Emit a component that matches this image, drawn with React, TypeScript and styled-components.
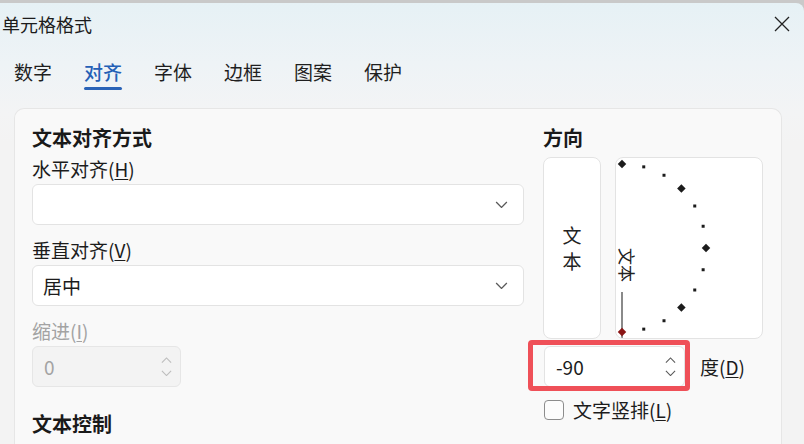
import { FC, ReactNode } from "react";
import styled, { createGlobalStyle } from "styled-components";

const GlobalStyle = createGlobalStyle`
  html, body {
    margin: 0;
    padding: 0;
    background: #c9c9c9;
    overflow: hidden;
  }
  body {
    font-family: "Noto Sans CJK SC", "Noto Sans", sans-serif;
    color: #1c1c1c;
  }
  u {
    text-decoration-thickness: 1px;
    text-underline-offset: 2px;
  }
`;

const DialogWindow = styled.div`
  margin-top: 3px;
  height: 441px;
  width: 804px;
  border-top-right-radius: 8px;
  overflow: hidden;
  background: linear-gradient(180deg, #e6f1f5 0px, #eef3f6 60px, #f3f4f5 110px, #f3f3f3 140px);
  display: flex;
  flex-direction: column;
`;

const TitleBar = styled.div`
  height: 41px;
  display: flex;
  align-items: center;
  justify-content: space-between;
  padding: 0 14px 0 2px;
`;

const TitleText = styled.span`
  font-size: 18px;
  line-height: 24px;
`;

const CloseButton = styled.div`
  width: 16px;
  height: 16px;
  display: flex;
  cursor: pointer;
`;

const TabBar = styled.div`
  display: flex;
  gap: 32px;
  padding: 15px 0 0 14px;
`;

const TabItem = styled.div<{ active?: boolean }>`
  display: flex;
  flex-direction: column;
  align-items: center;
  font-size: 19px;
  line-height: 26px;
  color: ${({ active }) => (active ? "#2560b6" : "#1f1f1f")};
  font-weight: ${({ active }) => (active ? 500 : 400)};
  &::after {
    content: "";
    margin-top: 2px;
    width: 38px;
    height: 3px;
    border-radius: 2px;
    background: ${({ active }) => (active ? "#2a63b7" : "transparent")};
  }
`;

const Card = styled.div`
  margin: 18px 0 0 14px;
  width: 768px;
  flex: 1;
  box-sizing: border-box;
  background: #f9f9f9;
  border: 1px solid #e6e6e6;
  border-bottom: none;
  border-radius: 10px 10px 0 0;
  padding: 15px 17px 0 17px;
  display: grid;
  grid-template-columns: 492px 221px;
  column-gap: 19px;
  align-items: start;
`;

const Column = styled.div`
  display: flex;
  flex-direction: column;
`;

const Heading = styled.div<{ gap?: number }>`
  font-size: 20px;
  line-height: 28px;
  font-weight: 700;
  color: #1a1a1a;
  margin-top: ${({ gap }) => gap ?? 0}px;
`;

const FieldLabel = styled.div<{ gap?: number; disabled?: boolean }>`
  font-size: 19px;
  line-height: 26px;
  margin-top: ${({ gap }) => gap ?? 0}px;
  color: ${({ disabled }) => (disabled ? "#a3a3a3" : "#1c1c1c")};
`;

const SelectBox = styled.div`
  margin-top: 2px;
  height: 41px;
  box-sizing: border-box;
  background: #ffffff;
  border: 1px solid #e3e3e3;
  border-radius: 6px;
  display: flex;
  align-items: center;
  justify-content: space-between;
  padding: 0 15px 0 10px;
  font-size: 19px;
`;

const SpinWrap = styled.div`
  margin-top: 2px;
`;

const SpinBox = styled.div<{ width: number; disabled?: boolean }>`
  width: ${({ width }) => width}px;
  height: 41px;
  box-sizing: border-box;
  background: ${({ disabled }) => (disabled ? "#f3f3f3" : "#ffffff")};
  border: 1px solid ${({ disabled }) => (disabled ? "#e6e6e6" : "#e3e3e3")};
  border-radius: 6px;
  display: flex;
  align-items: center;
  justify-content: space-between;
  padding: 0 8px 0 11px;
  font-size: 19px;
  color: ${({ disabled }) => (disabled ? "#a3a3a3" : "#1c1c1c")};
`;

const SpinArrows = styled.div<{ faint?: boolean }>`
  display: flex;
  flex-direction: column;
  gap: 6px;
  opacity: ${({ faint }) => (faint ? 0.35 : 1)};
`;

const OrientationRow = styled.div`
  margin-top: 5px;
  display: flex;
  gap: 14px;
`;

const OrientationPanel = styled.div<{ width: number }>`
  width: ${({ width }) => width}px;
  height: 182px;
  box-sizing: border-box;
  background: #ffffff;
  border: 1px solid #e3e3e3;
  border-radius: 8px;
  overflow: hidden;
  position: relative;
`;

const VerticalText = styled.div`
  height: 100%;
  display: flex;
  flex-direction: column;
  align-items: center;
  justify-content: center;
  font-size: 19px;
  line-height: 26px;
  color: #222;
`;

const DialSvg = styled.svg`
  position: absolute;
  left: -1px;
  top: -1px;
`;

const DegreeRow = styled.div`
  margin-top: 7px;
  margin-left: 1px;
  display: flex;
  align-items: center;
  gap: 15px;
  position: relative;
`;

const UnitLabel = styled.span`
  font-size: 19px;
`;

const Highlight = styled.div`
  position: absolute;
  left: -16px;
  top: -6px;
  width: 162px;
  height: 51px;
  box-sizing: border-box;
  border: 5px solid #ef5058;
  border-radius: 4px;
  pointer-events: none;
`;

const CheckRow = styled.label`
  margin-top: 12px;
  margin-left: 1px;
  display: flex;
  align-items: center;
  gap: 9px;
  font-size: 19px;
  line-height: 22px;
`;

const CheckSquare = styled.span`
  width: 20px;
  height: 20px;
  box-sizing: border-box;
  border: 1px solid #8c8c8c;
  border-radius: 4px;
  background: #fcfcfc;
`;

const Chevron: FC<{ up?: boolean; size?: number; color?: string }> = ({ up, size = 13, color = "#5a5a5a" }) => (
  <svg width={size} height={size / 2 + 1} viewBox="0 0 12 7">
    <polyline
      points={up ? "1,6 6,1 11,6" : "1,1 6,6 11,1"}
      fill="none"
      stroke={color}
      strokeWidth="1.2"
    />
  </svg>
);

const Spinner: FC<{ faint?: boolean }> = ({ faint }) => (
  <SpinArrows faint={faint}>
    <Chevron up size={11} />
    <Chevron size={11} />
  </SpinArrows>
);

const Underlined: FC<{ text: string; k: string }> = ({ text, k }) => (
  <>
    {text}(<u>{k}</u>)
  </>
);

const Dial: FC = () => {
  const cx = 7;
  const cy = 91;
  const r = 84;
  const marks: ReactNode[] = [];
  for (let a = -90; a <= 90; a += 15) {
    const rad = (a * Math.PI) / 180;
    const x = cx + r * Math.cos(rad);
    const y = cy - r * Math.sin(rad);
    if (a % 45 === 0) {
      marks.push(
        <rect
          key={a}
          x={x - 3}
          y={y - 3}
          width={6}
          height={6}
          transform={`rotate(45 ${x} ${y})`}
          fill={a === -90 ? "#8a1515" : "#1c1c1c"}
        />
      );
    } else {
      marks.push(<rect key={a} x={x - 1.5} y={y - 1.5} width={3} height={3} fill="#1c1c1c" />);
    }
  }
  return (
    <DialSvg width="148" height="182">
      <line x1={cx} y1={135} x2={cx} y2={182} stroke="#8a8a8a" strokeWidth="2" />
      {marks}
      <text
        x={0}
        y={0}
        transform={`translate(5 ${cy}) rotate(90)`}
        fontSize="17"
        fontFamily="'Noto Sans CJK SC', sans-serif"
        fill="#222"
      >
        文本
      </text>
    </DialSvg>
  );
};

const App: FC = () => (
  <>
    <GlobalStyle />
    <DialogWindow>
      <TitleBar>
        <TitleText>单元格格式</TitleText>
        <CloseButton>
          <svg width="16" height="16" viewBox="0 0 16 16">
            <path d="M1 1 L15 15 M15 1 L1 15" stroke="#222" strokeWidth="1.3" />
          </svg>
        </CloseButton>
      </TitleBar>
      <TabBar>
        <TabItem>数字</TabItem>
        <TabItem active>对齐</TabItem>
        <TabItem>字体</TabItem>
        <TabItem>边框</TabItem>
        <TabItem>图案</TabItem>
        <TabItem>保护</TabItem>
      </TabBar>
      <Card>
        <Column>
          <Heading>文本对齐方式</Heading>
          <FieldLabel gap={4}>
            <Underlined text="水平对齐" k="H" />
          </FieldLabel>
          <SelectBox>
            <span />
            <Chevron />
          </SelectBox>
          <FieldLabel gap={12}>
            <Underlined text="垂直对齐" k="V" />
          </FieldLabel>
          <SelectBox>
            <span>居中</span>
            <Chevron />
          </SelectBox>
          <FieldLabel gap={12} disabled>
            <Underlined text="缩进" k="I" />
          </FieldLabel>
          <SpinWrap>
            <SpinBox width={149} disabled>
              <span>0</span>
              <Spinner faint />
            </SpinBox>
          </SpinWrap>
          <Heading gap={23}>文本控制</Heading>
        </Column>
        <Column>
          <Heading>方向</Heading>
          <OrientationRow>
            <OrientationPanel width={58}>
              <VerticalText>
                <span>文</span>
                <span>本</span>
              </VerticalText>
            </OrientationPanel>
            <OrientationPanel width={148}>
              <Dial />
            </OrientationPanel>
          </OrientationRow>
          <DegreeRow>
            <SpinBox width={141}>
              <span>-90</span>
              <Spinner />
            </SpinBox>
            <UnitLabel>
              <Underlined text="度" k="D" />
            </UnitLabel>
            <Highlight />
          </DegreeRow>
          <CheckRow>
            <CheckSquare />
            <span>
              <Underlined text="文字竖排" k="L" />
            </span>
          </CheckRow>
        </Column>
      </Card>
    </DialogWindow>
  </>
);

export default App;
